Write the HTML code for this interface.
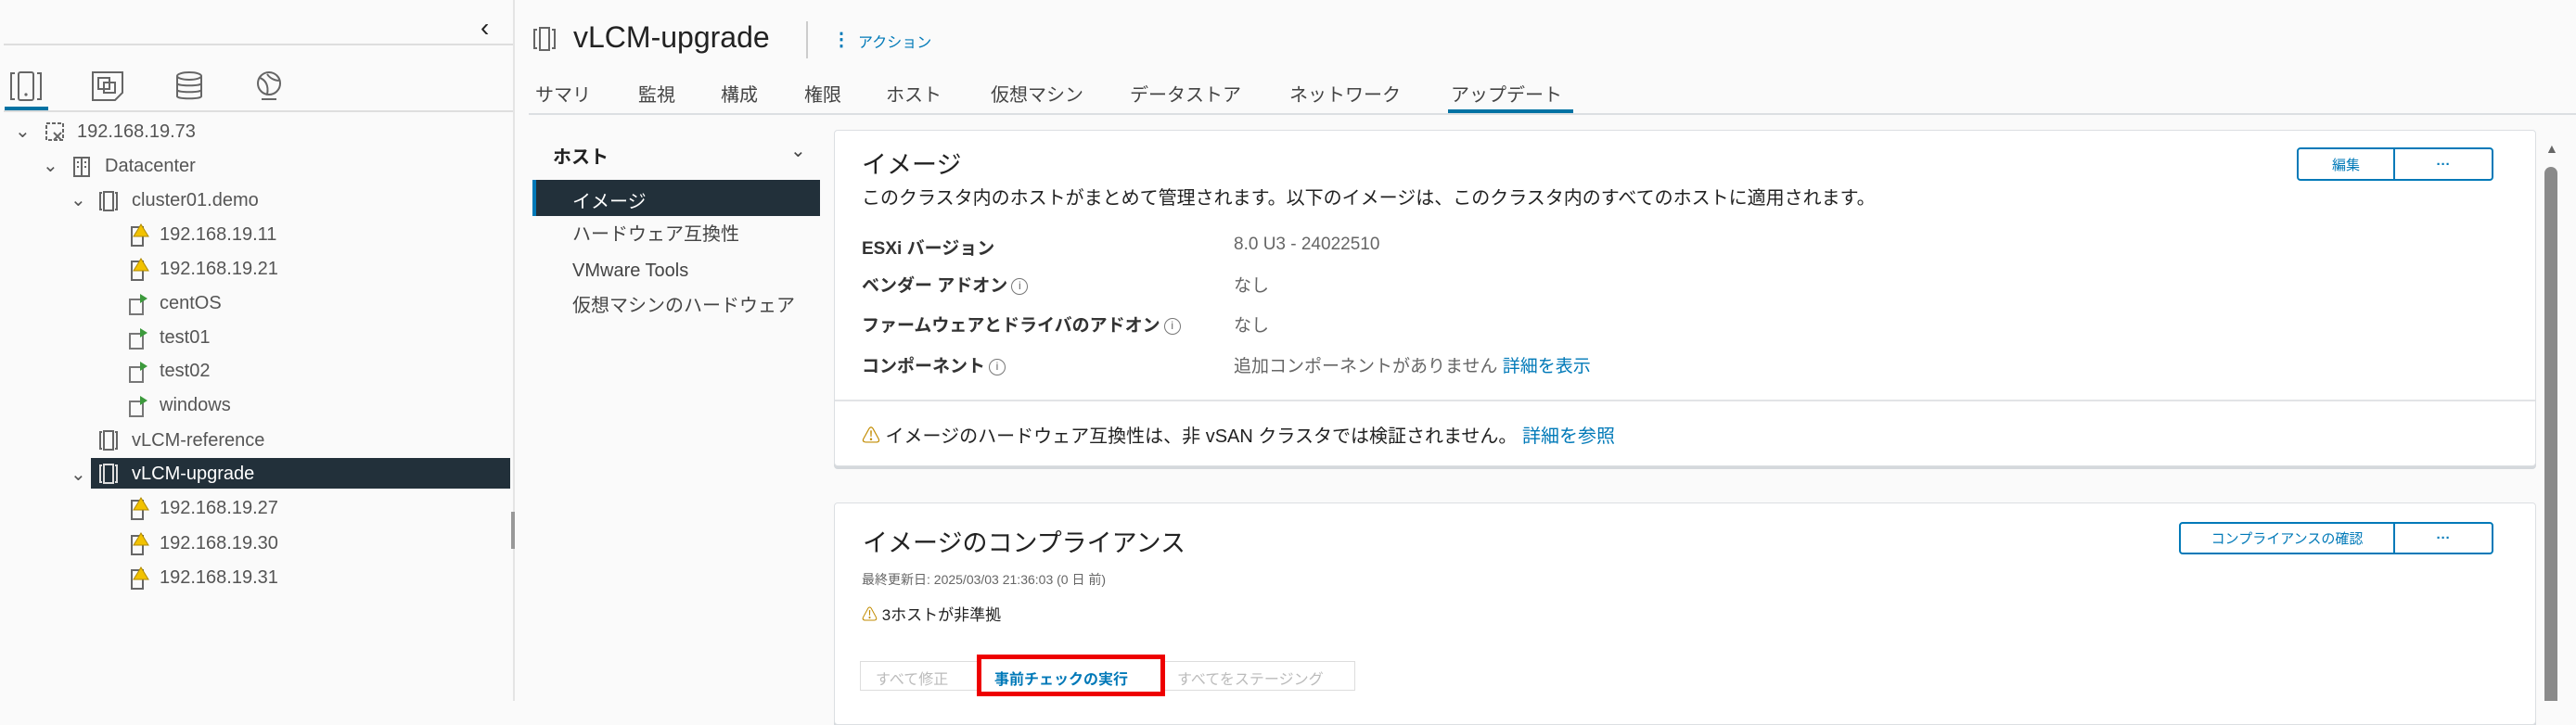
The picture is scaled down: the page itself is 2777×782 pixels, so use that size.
<!DOCTYPE html>
<html><head><meta charset="utf-8">
<style>
*{margin:0;padding:0;box-sizing:border-box}
body{width:2777px;height:756px;overflow:hidden;background:#fafafa;font-family:"Liberation Sans","Noto Sans CJK JP",sans-serif;color:#333;position:relative}
.a{position:absolute;white-space:nowrap}
.t{font-size:20px;color:#555;line-height:24px}
.g{stroke:#666;fill:none;stroke-width:2}
.card{position:absolute;background:#fff;border:1px solid #dcdfe2;border-radius:4px;box-shadow:0 3px 0 #d4d8dc}
.btn{position:absolute;border:2px solid #0079b8;border-radius:4px;color:#0079b8;font-size:15px;display:flex;align-items:center;justify-content:center;background:#fff}
.lbl{font-size:19px;color:#333;font-weight:bold}
.val{font-size:19px;color:#666}
.info{display:inline-block;width:18px;height:18px;border:1.5px solid #777;border-radius:50%;font-size:12px;text-align:center;line-height:15px;color:#666;font-weight:normal;vertical-align:middle;margin-left:4px}
</style></head><body>
<!-- left panel -->
<div class="a" style="left:0;top:0;width:553px;height:756px;background:#fafafa"></div>
<div class="a" style="left:553px;top:0;width:2px;height:756px;background:#e4e4e4"></div>
<div class="a" style="left:551px;top:552px;width:4px;height:40px;background:#999"></div>
<div class="a" style="left:518px;top:14px;font-size:28px;color:#222">‹</div>
<div class="a" style="left:4px;top:47px;width:549px;height:2px;background:#dedede"></div>
<svg class="a" style="left:10px;top:76px" width="36" height="34" viewBox="0 0 36 34"><path class="g" d="M6 3H2v28h4M30 3h4v28h-4" /><rect class="g" x="10" y="2" width="16" height="30" rx="2"/><circle cx="18" cy="26" r="1.6" fill="#666"/></svg>
<svg class="a" style="left:98px;top:76px" width="36" height="34" viewBox="0 0 36 34"><path class="g" d="M2 2h32v22l-8 8H2z"/><rect class="g" x="8" y="8" width="12" height="12"/><rect class="g" x="14" y="13" width="12" height="11"/></svg>
<svg class="a" style="left:188px;top:76px" width="32" height="34" viewBox="0 0 32 34"><ellipse class="g" cx="16" cy="6" rx="13" ry="4"/><path class="g" d="M3 6v22c0 3 26 3 26 0V6M3 14c0 3 26 3 26 0M3 21c0 3 26 3 26 0"/></svg>
<svg class="a" style="left:274px;top:76px" width="32" height="34" viewBox="0 0 32 34"><circle class="g" cx="16" cy="14" r="12"/><path class="g" d="M6 8c6 2 10 8 8 18M14 4c4 6 12 8 14 6M8 31h16"/></svg>
<div class="a" style="left:5px;top:115px;width:47px;height:4px;background:#0072a3"></div>
<div class="a" style="left:4px;top:119px;width:549px;height:2px;background:#dedede"></div>
<!-- tree -->
<div class="a t" style="left:16px;top:130px">⌄</div><svg class="a" style="left:48px;top:131px" width="24" height="24"><rect class="g" x="2" y="2" width="18" height="18" stroke-dasharray="4 2"/><path class="g" d="M10 12l8 8M18 12l-8 8"/></svg><div class="a t" style="left:83px;top:130px">192.168.19.73</div>
<div class="a t" style="left:46px;top:167px">⌄</div><svg class="a" style="left:78px;top:168px" width="22" height="24"><rect class="g" x="2" y="2" width="16" height="20"/><path class="g" d="M10 2v20M5 7h2M13 7h2M5 12h2M13 12h2"/></svg><div class="a t" style="left:113px;top:167px">Datacenter</div>
<div class="a t" style="left:76px;top:204px">⌄</div><svg class="a" style="left:106px;top:205px" width="22" height="24"><path class="g" d="M4 3H2v18h2M18 3h2v18h-2"/><rect class="g" x="6" y="2" width="10" height="20"/></svg><div class="a t" style="left:142px;top:204px">cluster01.demo</div>
<svg style="display:none"><symbol id="h" viewBox="0 0 22 26"><rect x="2" y="4" width="12" height="20" fill="none" stroke="#666" stroke-width="2"/><path d="M12 1l8 13h-16z" fill="#f2c200" stroke="#b08a00"/></symbol><symbol id="v" viewBox="0 0 22 26"><rect x="2" y="8" width="14" height="16" fill="none" stroke="#777" stroke-width="2"/><path d="M13 2l8 5-8 5z" fill="#3c9a3c"/></symbol></svg>
<svg class="a" style="left:140px;top:241px" width="22" height="26"><use href="#h"/></svg><div class="a t" style="left:172px;top:241px">192.168.19.11</div>
<svg class="a" style="left:140px;top:278px" width="22" height="26"><use href="#h"/></svg><div class="a t" style="left:172px;top:278px">192.168.19.21</div>
<svg class="a" style="left:138px;top:315px" width="22" height="26"><use href="#v"/></svg><div class="a t" style="left:172px;top:315px">centOS</div>
<svg class="a" style="left:138px;top:352px" width="22" height="26"><use href="#v"/></svg><div class="a t" style="left:172px;top:352px">test01</div>
<svg class="a" style="left:138px;top:388px" width="22" height="26"><use href="#v"/></svg><div class="a t" style="left:172px;top:388px">test02</div>
<svg class="a" style="left:138px;top:425px" width="22" height="26"><use href="#v"/></svg><div class="a t" style="left:172px;top:425px">windows</div>
<svg class="a" style="left:106px;top:463px" width="22" height="24"><path class="g" d="M4 3H2v18h2M18 3h2v18h-2"/><rect class="g" x="6" y="2" width="10" height="20"/></svg><div class="a t" style="left:142px;top:463px">vLCM-reference</div>
<div class="a t" style="left:76px;top:500px">⌄</div>
<div class="a" style="left:98px;top:494px;width:452px;height:33px;background:#22303a"></div>
<svg class="a" style="left:106px;top:499px" width="22" height="24"><path d="M4 3H2v18h2M18 3h2v18h-2" fill="none" stroke="#ddd" stroke-width="2"/><rect x="6" y="2" width="10" height="20" fill="none" stroke="#ddd" stroke-width="2"/></svg><div class="a t" style="left:142px;top:499px;color:#fff">vLCM-upgrade</div>
<svg class="a" style="left:140px;top:536px" width="22" height="26"><use href="#h"/></svg><div class="a t" style="left:172px;top:536px">192.168.19.27</div>
<svg class="a" style="left:140px;top:574px" width="22" height="26"><use href="#h"/></svg><div class="a t" style="left:172px;top:574px">192.168.19.30</div>
<svg class="a" style="left:140px;top:611px" width="22" height="26"><use href="#h"/></svg><div class="a t" style="left:172px;top:611px">192.168.19.31</div>
<!-- header -->
<svg class="a" style="left:574px;top:28px" width="26" height="28"><path class="g" d="M5 4H2v20h3M21 4h3v20h-3"/><rect class="g" x="8" y="2" width="10" height="24"/></svg>
<div class="a" style="left:618px;top:22px;font-size:32px;color:#222">vLCM-upgrade</div>
<div class="a" style="left:869px;top:23px;width:2px;height:40px;background:#ccc"></div>
<div class="a" style="left:897px;top:30px;font-size:20px;color:#0079b8;font-weight:bold">⋮</div>
<div class="a" style="left:925px;top:32px;font-size:16px;color:#0079b8">アクション</div>
<div class="a" style="left:577px;top:86px;font-size:20px;color:#444">サマリ</div>
<div class="a" style="left:688px;top:86px;font-size:20px;color:#444">監視</div>
<div class="a" style="left:777px;top:86px;font-size:20px;color:#444">構成</div>
<div class="a" style="left:867px;top:86px;font-size:20px;color:#444">権限</div>
<div class="a" style="left:955px;top:86px;font-size:20px;color:#444">ホスト</div>
<div class="a" style="left:1068px;top:86px;font-size:20px;color:#444">仮想マシン</div>
<div class="a" style="left:1218px;top:86px;font-size:20px;color:#444">データストア</div>
<div class="a" style="left:1390px;top:86px;font-size:20px;color:#444">ネットワーク</div>
<div class="a" style="left:1564px;top:86px;font-size:20px;color:#444">アップデート</div>
<div class="a" style="left:570px;top:122px;width:2207px;height:2px;background:#dcdfe2"></div>
<div class="a" style="left:1561px;top:118px;width:135px;height:4px;background:#0072a3"></div>
<!-- subnav -->
<div class="a" style="left:596px;top:153px;font-size:20px;font-weight:bold;color:#222">ホスト</div>
<div class="a" style="left:852px;top:150px;font-size:20px;color:#444">⌄</div>
<div class="a" style="left:574px;top:194px;width:310px;height:39px;background:#22303a;border-left:4px solid #0079b8"></div>
<div class="a" style="left:617px;top:201px;font-size:20px;color:#fff">イメージ</div>
<div class="a" style="left:617px;top:236px;font-size:20px;color:#444">ハードウェア互換性</div>
<div class="a" style="left:617px;top:281px;font-size:20px;color:#444">VMware Tools</div>
<div class="a" style="left:617px;top:313px;font-size:20px;color:#444">仮想マシンのハードウェア</div>
<!-- card 1 -->
<div class="card" style="left:899px;top:140px;width:1835px;height:363px"></div>
<div class="a" style="left:900px;top:431px;width:1833px;height:2px;background:#e2e4e6"></div>
<div class="a" style="left:929px;top:156px;font-size:27px;color:#222">イメージ</div>
<div class="a" style="left:929px;top:197px;font-size:20px;color:#222">このクラスタ内のホストがまとめて管理されます。以下のイメージは、このクラスタ内のすべてのホストに適用されます。</div>
<div class="btn" style="left:2476px;top:159px;width:106px;height:36px;border-radius:4px 0 0 4px">編集</div>
<div class="btn" style="left:2580px;top:159px;width:108px;height:36px;border-radius:0 4px 4px 0;font-weight:bold">···</div>
<div class="a lbl" style="left:929px;top:253px">ESXi バージョン</div><div class="a val" style="left:1330px;top:253px">8.0 U3 - 24022510</div>
<div class="a lbl" style="left:929px;top:293px">ベンダー アドオン<span class="info">i</span></div><div class="a val" style="left:1330px;top:293px">なし</div>
<div class="a lbl" style="left:929px;top:336px">ファームウェアとドライバのアドオン<span class="info">i</span></div><div class="a val" style="left:1330px;top:336px">なし</div>
<div class="a lbl" style="left:929px;top:380px">コンポーネント<span class="info">i</span></div><div class="a val" style="left:1330px;top:380px">追加コンポーネントがありません <span style="color:#0079b8">詳細を表示</span></div>
<div class="a" style="left:929px;top:454px;font-size:20px;color:#222"><span style="color:#c28b00">⚠</span> イメージのハードウェア互換性は、非 vSAN クラスタでは検証されません。 <span style="color:#0079b8">詳細を参照</span></div>
<!-- scrollbar -->
<div class="a" style="left:2744px;top:152px;font-size:14px;color:#666">▲</div>
<div class="a" style="left:2743px;top:180px;width:14px;height:576px;background:#8a8a8a;border-radius:7px 7px 0 0"></div>
<!-- card 2 -->
<div class="card" style="left:899px;top:542px;width:1835px;height:240px"></div>
<div class="a" style="left:930px;top:564px;font-size:27px;color:#222">イメージのコンプライアンス</div>
<div class="btn" style="left:2349px;top:563px;width:233px;height:35px;border-radius:4px 0 0 4px">コンプライアンスの確認</div>
<div class="btn" style="left:2580px;top:563px;width:108px;height:35px;border-radius:0 4px 4px 0;font-weight:bold">···</div>
<div class="a" style="left:929px;top:615px;font-size:14px;color:#666">最終更新日: 2025/03/03 21:36:03 (0 日 前)</div>
<div class="a" style="left:929px;top:649px;font-size:17px;color:#222"><span style="color:#c28b00">⚠</span> 3ホストが非準拠</div>
<div class="a" style="left:927px;top:713px;width:534px;height:32px;border:1px solid #ddd;background:#fff"></div>
<div class="a" style="left:944px;top:719px;font-size:16px;color:#bbb">すべて修正</div>
<div class="a" style="left:1053px;top:706px;width:203px;height:45px;border:5px solid #e00;background:#fff"></div>
<div class="a" style="left:1072px;top:719px;font-size:16px;color:#0079b8;font-weight:bold">事前チェックの実行</div>
<div class="a" style="left:1269px;top:719px;font-size:16px;color:#bbb">すべてをステージング</div>
</body></html>
